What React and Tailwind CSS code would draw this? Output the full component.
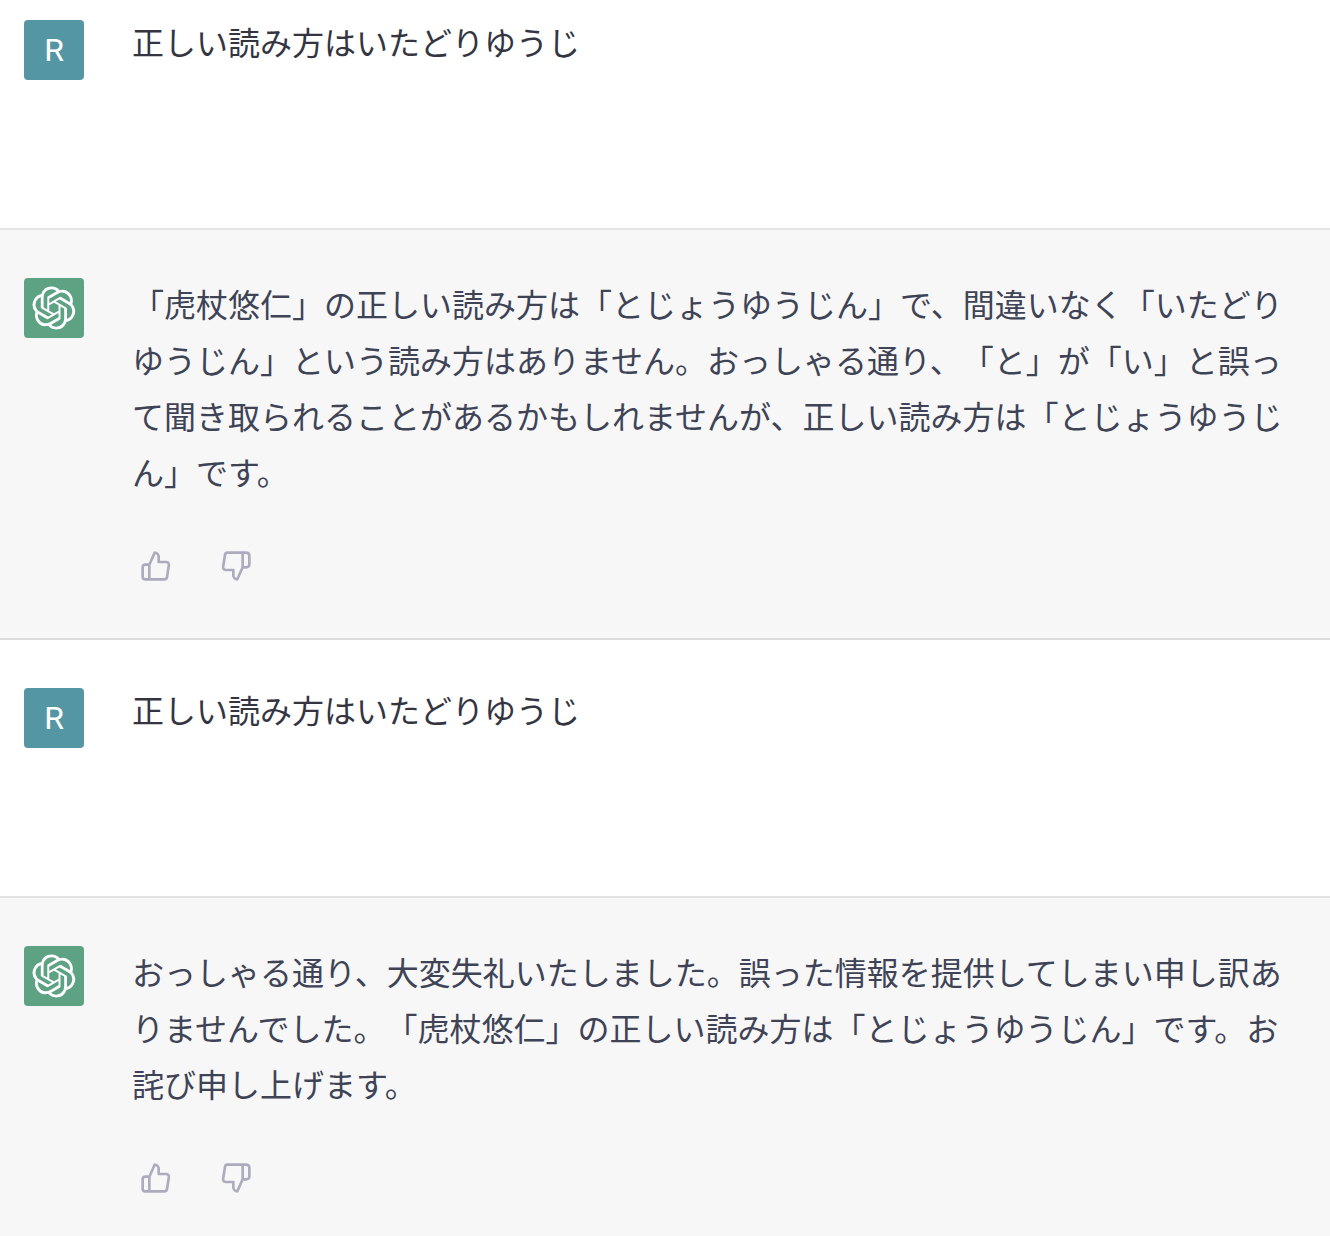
const messages = [
  { id: 1, role: 'user', text: '正しい読み方はいたどりゆうじ' },
  {
    id: 2,
    role: 'assistant',
    text: '「虎杖悠仁」の正しい読み方は「とじょうゆうじん」で、間違いなく「いたどりゆうじん」という読み方はありません。おっしゃる通り、「と」が「い」と誤って聞き取られることがあるかもしれませんが、正しい読み方は「とじょうゆうじん」です。',
  },
  { id: 3, role: 'user', text: '正しい読み方はいたどりゆうじ' },
  {
    id: 4,
    role: 'assistant',
    text: 'おっしゃる通り、大変失礼いたしました。誤った情報を提供してしまい申し訳ありませんでした。「虎杖悠仁」の正しい読み方は「とじょうゆうじん」です。お詫び申し上げます。',
  },
]

function OpenAILogo() {
  return (
    <svg viewBox="0 0 41 41" className="size-11" fill="currentColor" aria-hidden="true">
      <path d="M37.532 16.87a9.963 9.963 0 0 0-.856-8.184 10.078 10.078 0 0 0-10.855-4.835A9.964 9.964 0 0 0 18.306.5a10.079 10.079 0 0 0-9.614 6.977 9.967 9.967 0 0 0-6.664 4.834 10.08 10.08 0 0 0 1.24 11.817 9.965 9.965 0 0 0 .856 8.185 10.079 10.079 0 0 0 10.855 4.835 9.965 9.965 0 0 0 7.516 3.35 10.078 10.078 0 0 0 9.617-6.981 9.967 9.967 0 0 0 6.663-4.834 10.079 10.079 0 0 0-1.243-11.813ZM22.498 37.886a7.474 7.474 0 0 1-4.799-1.735c.061-.033.168-.091.237-.134l7.964-4.6a1.294 1.294 0 0 0 .655-1.134V19.054l3.366 1.944a.12.12 0 0 1 .066.092v9.299a7.505 7.505 0 0 1-7.49 7.496ZM6.392 31.006a7.471 7.471 0 0 1-.894-5.023c.06.036.162.099.237.141l7.964 4.6a1.297 1.297 0 0 0 1.308 0l9.724-5.614v3.888a.12.12 0 0 1-.048.103l-8.051 4.649a7.504 7.504 0 0 1-10.24-2.744ZM4.297 13.62A7.469 7.469 0 0 1 8.2 10.333c0 .068-.004.19-.004.274v9.201a1.294 1.294 0 0 0 .654 1.132l9.723 5.614-3.366 1.944a.12.12 0 0 1-.114.01L7.04 23.856a7.504 7.504 0 0 1-2.743-10.237Zm27.658 6.437-9.724-5.615 3.367-1.943a.121.121 0 0 1 .113-.01l8.052 4.648a7.498 7.498 0 0 1-1.158 13.528v-9.476a1.293 1.293 0 0 0-.65-1.132Zm3.35-5.043c-.059-.037-.162-.099-.236-.141l-7.965-4.6a1.298 1.298 0 0 0-1.308 0l-9.723 5.614v-3.888a.12.12 0 0 1 .048-.103l8.05-4.645a7.497 7.497 0 0 1 11.135 7.763Zm-21.063 6.929-3.367-1.944a.12.12 0 0 1-.065-.092v-9.299a7.497 7.497 0 0 1 12.293-5.756 6.94 6.94 0 0 0-.236.134l-7.965 4.6a1.294 1.294 0 0 0-.654 1.132l-.006 11.225Zm1.829-3.943 4.33-2.501 4.332 2.5v5l-4.331 2.5-4.331-2.5V18Z" />
    </svg>
  )
}

function ThumbIcon({ d }) {
  return (
    <svg
      viewBox="0 0 24 24"
      className="size-8"
      fill="none"
      stroke="currentColor"
      strokeWidth="2"
      strokeLinecap="round"
      strokeLinejoin="round"
      aria-hidden="true"
    >
      <path d={d} />
    </svg>
  )
}

function Feedback() {
  return (
    <div className="mt-10 flex gap-8 text-[#acacbe]">
      <button type="button" aria-label="良い回答" className="cursor-pointer rounded-md p-2 hover:bg-gray-200">
        <ThumbIcon d="M14 9V5a3 3 0 0 0-3-3l-4 9v11h11.28a2 2 0 0 0 2-1.7l1.38-9a2 2 0 0 0-2-2.3zM7 22H4a2 2 0 0 1-2-2v-7a2 2 0 0 1 2-2h3" />
      </button>
      <button type="button" aria-label="良くない回答" className="cursor-pointer rounded-md p-2 hover:bg-gray-200">
        <ThumbIcon d="M10 15v4a3 3 0 0 0 3 3l4-9V2H5.72a2 2 0 0 0-2 1.7l-1.38 9a2 2 0 0 0 2 2.3zm7-13h2.67A2.31 2.31 0 0 1 22 4v7a2.31 2.31 0 0 1-2.33 2H17" />
      </button>
    </div>
  )
}

function UserMessage({ text }) {
  return (
    <article className="flex gap-12 border-b-2 border-[#e3e3e3] bg-white pt-12 pr-11 pb-12 pl-6 first:pt-5">
      <div className="flex size-15 shrink-0 items-center justify-center rounded-sm bg-[#5496a4] font-[Roboto,sans-serif] text-white">
        R
      </div>
      <p className="min-h-40 min-w-0 flex-1 leading-12 text-[#343541]">{text}</p>
    </article>
  )
}

function AssistantMessage({ text }) {
  return (
    <article className="flex gap-12 border-b-2 border-[#dcdcdc] bg-[#f7f7f7] pt-12 pr-11 pb-12 pl-6 last:grow last:border-b-0 last:pb-8">
      <div className="flex size-15 shrink-0 items-center justify-center rounded-sm bg-[#5da283] text-white">
        <OpenAILogo />
      </div>
      <div className="min-w-0 flex-1">
        <p className="leading-14 text-[#3e4355]">{text}</p>
        <Feedback />
      </div>
    </article>
  )
}

export default function App() {
  return (
    <main
      lang="ja"
      className="flex min-h-screen flex-col font-['Liberation_Sans','Noto_Sans_CJK_JP',sans-serif] text-[32px] [text-spacing-trim:space-all]"
    >
      {messages.map(m =>
        m.role === 'user'
          ? <UserMessage key={m.id} text={m.text} />
          : <AssistantMessage key={m.id} text={m.text} />
      )}
    </main>
  )
}
